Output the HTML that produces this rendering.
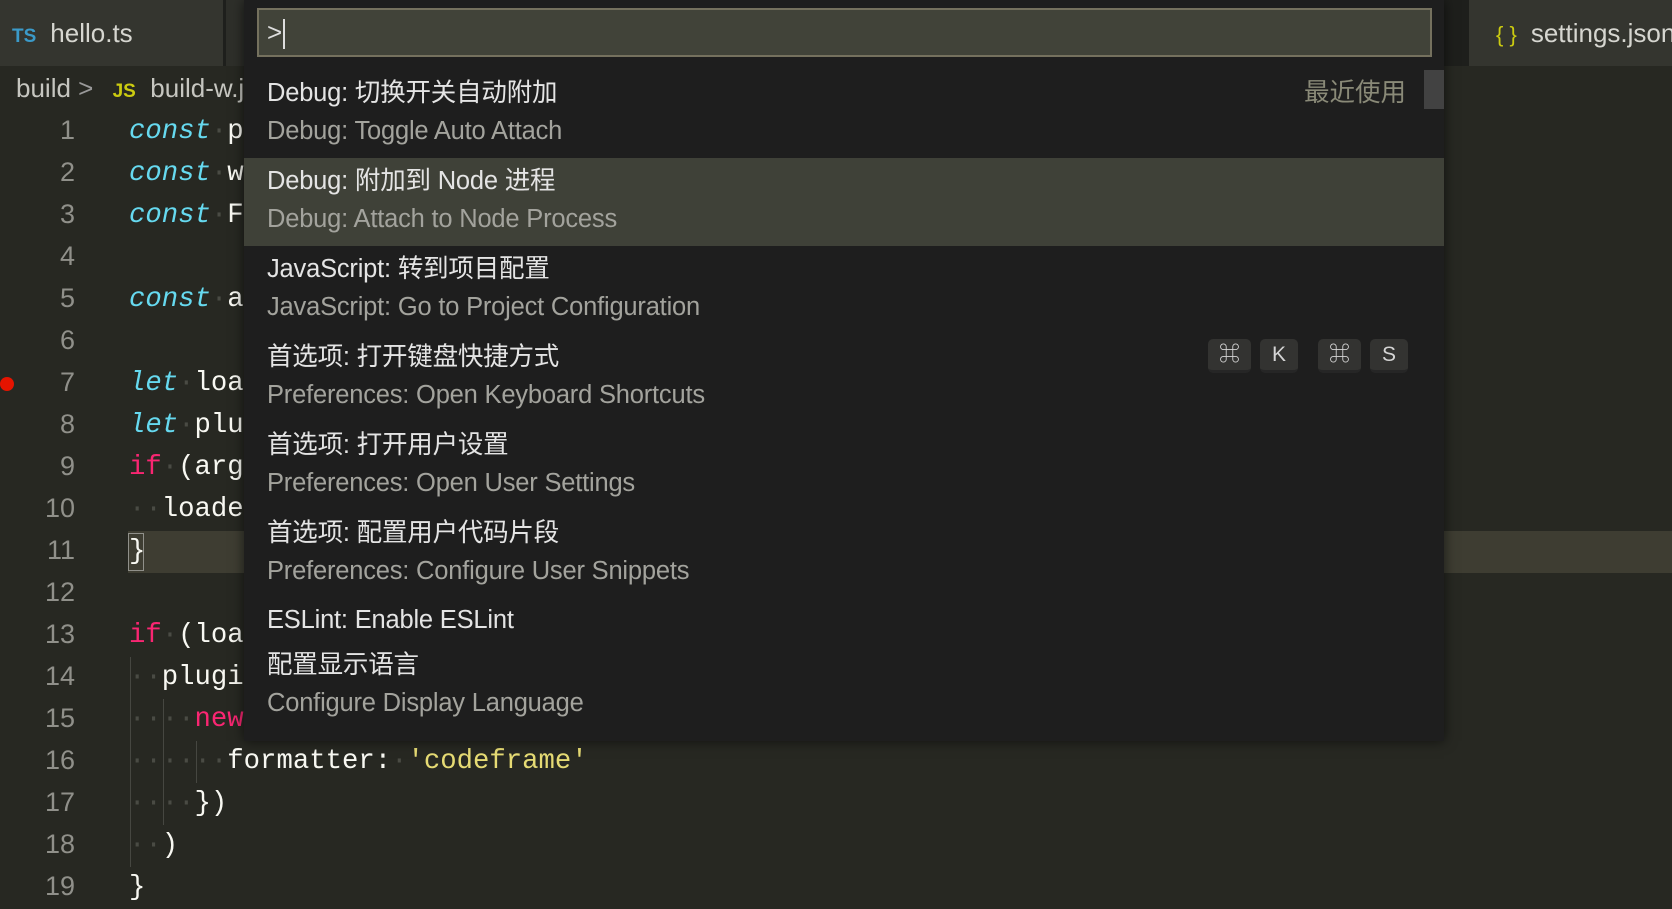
<!DOCTYPE html>
<html><head><meta charset="utf-8"><style>
*{margin:0;padding:0;box-sizing:border-box}
body{width:1672px;height:900px;background:#272822;position:relative;overflow:hidden;font-family:"Liberation Sans","Noto Sans CJK SC",sans-serif}
.abs{position:absolute}
.tabbar{left:0;top:0;width:1672px;height:66px;background:#1e1f1c}
.tab{top:0;height:66px;background:#34352f;color:#d6d6d0;font-size:26px;line-height:66px;white-space:nowrap;overflow:hidden}
.code{font-family:"Liberation Mono","DejaVu Sans Mono",monospace;font-size:27.3px;white-space:pre;color:#f8f8f2}
.ln{left:0;width:75px;text-align:right;color:#90908a;font-family:"Liberation Sans",sans-serif;font-size:27px;height:42px;line-height:38px}
.cl{left:129px;height:42px;line-height:42px}
.k{color:#66d9ef;font-style:italic}.r{color:#f92672}.s{color:#e6db74}.d{color:#4a4b44}
.w{left:244px;top:0;width:1200px;height:741px;background:#1e1e1e;box-shadow:0 0 12px rgba(0,0,0,.6)}
.inp{left:13px;top:8px;width:1175px;height:49px;background:#414339;border:2px solid #75715e;color:#ddd;font-size:26px;line-height:45px;padding-left:8px}
.row{left:0;width:1200px;height:88px}
.t{position:absolute;left:23px;top:5px;font-size:25.5px;color:#e4e4e4;line-height:36px;letter-spacing:-0.2px}
.st{position:absolute;left:23px;top:43px;font-size:25.5px;color:#a3a39d;line-height:36px;letter-spacing:-0.2px}
.key{position:absolute;top:339px;height:34px;background:#333331;border-bottom:3px solid #262626;border-radius:5px;color:#d4d4d4;font-size:21px;text-align:center;line-height:32px}
</style></head><body>
<div class="abs tabbar"></div>
<div class="abs tab" style="left:0;width:223px"><span style="color:#3b9ac9;font-weight:bold;font-size:19px;margin-left:12px">TS</span><span style="margin-left:14px">hello.ts</span></div>
<div class="abs tab" style="left:226px;width:30px;background:#2e2f2a"></div>
<div class="abs tab" style="left:1469px;width:203px"><span style="color:#cbcb10;font-size:22px;margin-left:27px">{ }</span><span style="margin-left:14px">settings.json</span></div>
<div class="abs" style="left:16px;top:71px;font-size:26px;color:#c6c6c0;line-height:34px;white-space:nowrap">build <span style="color:#999">&gt;</span> <span style="color:#cbcb10;font-weight:bold;font-size:19px;margin-left:12px">JS</span>&nbsp; build-w.js</div>
<div class="abs" style="left:128px;top:531px;width:1544px;height:42px;background:#3e3d32"></div>
<div class="abs" style="left:128px;top:533px;width:16px;height:38px;border:1px solid #90908a"></div>
<div class="abs" style="left:0;top:377px;width:14px;height:14px;border-radius:50%;background:#e51400"></div>
<div class="code">
<div class="abs ln" style="top:111px">1</div><div class="abs cl" style="top:111px"><span class="k">const</span><span class="d">·</span>path</div>
<div class="abs ln" style="top:153px">2</div><div class="abs cl" style="top:153px"><span class="k">const</span><span class="d">·</span>webpack</div>
<div class="abs ln" style="top:195px">3</div><div class="abs cl" style="top:195px"><span class="k">const</span><span class="d">·</span>Fork</div>
<div class="abs ln" style="top:237px">4</div>
<div class="abs ln" style="top:279px">5</div><div class="abs cl" style="top:279px"><span class="k">const</span><span class="d">·</span>args</div>
<div class="abs ln" style="top:321px">6</div>
<div class="abs ln" style="top:363px">7</div><div class="abs cl" style="top:363px"><span class="k">let</span><span class="d">·</span>loader</div>
<div class="abs ln" style="top:405px">8</div><div class="abs cl" style="top:405px"><span class="k">let</span><span class="d">·</span>plugins</div>
<div class="abs ln" style="top:447px">9</div><div class="abs cl" style="top:447px"><span class="r">if</span><span class="d">·</span>(args</div>
<div class="abs ln" style="top:489px">10</div><div class="abs cl" style="top:489px"><span class="d">··</span>loader</div>
<div class="abs ln" style="top:531px">11</div><div class="abs cl" style="top:531px">}</div>
<div class="abs ln" style="top:573px">12</div>
<div class="abs ln" style="top:615px">13</div><div class="abs cl" style="top:615px"><span class="r">if</span><span class="d">·</span>(loader</div>
<div class="abs ln" style="top:657px">14</div><div class="abs cl" style="top:657px"><span class="d">··</span>plugins</div>
<div class="abs ln" style="top:699px">15</div><div class="abs cl" style="top:699px"><span class="d">····</span><span class="r">new</span></div>
<div class="abs ln" style="top:741px">16</div><div class="abs cl" style="top:741px"><span class="d">······</span>formatter:<span class="d">·</span><span class="s">'codeframe'</span></div>
<div class="abs ln" style="top:783px">17</div><div class="abs cl" style="top:783px"><span class="d">····</span>})</div>
<div class="abs ln" style="top:825px">18</div><div class="abs cl" style="top:825px"><span class="d">··</span>)</div>
<div class="abs ln" style="top:867px">19</div><div class="abs cl" style="top:867px">}</div>
</div>
<div class="abs" style="left:130px;top:657px;width:1px;height:210px;background:#464741"></div>
<div class="abs" style="left:163px;top:699px;width:1px;height:126px;background:#464741"></div>
<div class="abs" style="left:196px;top:741px;width:1px;height:42px;background:#464741"></div>

<div class="abs w">
<div class="abs inp">&gt;<span style="display:inline-block;width:2px;height:30px;background:#ddd;vertical-align:middle;margin-left:1px"></span></div>
<div class="abs" style="left:1180px;top:70px;width:20px;height:39px;background:#424242"></div>
<div class="abs row" style="top:70px"><div class="t">Debug: 切换开关自动附加</div><div class="st">Debug: Toggle Auto Attach</div><div style="position:absolute;right:38px;top:5px;font-size:25.5px;line-height:36px;color:#8a8a78">最近使用</div></div>
<div class="abs row" style="top:158px;background:#3f4138"><div class="t">Debug: 附加到 Node 进程</div><div class="st">Debug: Attach to Node Process</div></div>
<div class="abs row" style="top:246px"><div class="t">JavaScript: 转到项目配置</div><div class="st">JavaScript: Go to Project Configuration</div></div>
<div class="abs row" style="top:334px"><div class="t">首选项: 打开键盘快捷方式</div><div class="st">Preferences: Open Keyboard Shortcuts</div></div>
<div class="key" style="left:964px;width:43px">⌘</div>
<div class="key" style="left:1016px;width:38px">K</div>
<div class="key" style="left:1074px;width:43px">⌘</div>
<div class="key" style="left:1126px;width:38px">S</div>
<div class="abs row" style="top:422px"><div class="t">首选项: 打开用户设置</div><div class="st">Preferences: Open User Settings</div></div>
<div class="abs row" style="top:510px"><div class="t">首选项: 配置用户代码片段</div><div class="st">Preferences: Configure User Snippets</div></div>
<div class="abs row" style="top:598px;height:44px"><div class="t" style="top:4px">ESLint: Enable ESLint</div></div>
<div class="abs row" style="top:642px"><div class="t">配置显示语言</div><div class="st">Configure Display Language</div></div>
</div>
</body></html>
